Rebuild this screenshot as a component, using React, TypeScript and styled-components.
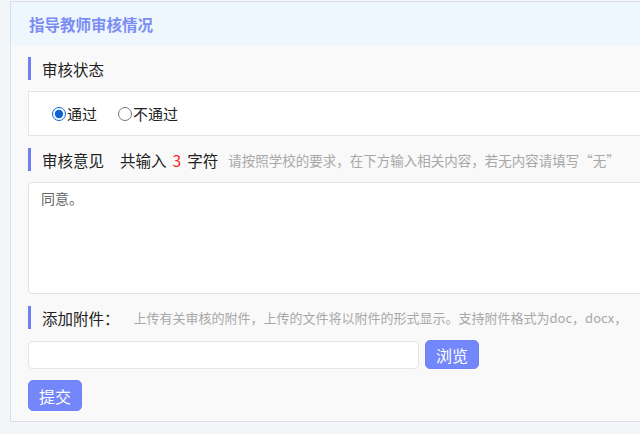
import { useState } from "react";
import styled, { createGlobalStyle } from "styled-components";

const GlobalStyle = createGlobalStyle`
  html, body {
    margin: 0;
    padding: 0;
    background: #f3f6f9;
    overflow: hidden;
  }
  body {
    font-family: "Noto Sans CJK SC", "Noto Sans", sans-serif;
  }
`;

const Page = styled.div`
  padding: 1px 0 0 10px;
`;

const Panel = styled.section`
  width: 700px;
  border: 1px solid #dcdfe3;
  background: #f9f9f9;
`;

const PanelHeader = styled.header`
  height: 44px;
  display: flex;
  align-items: center;
  padding-left: 18px;
  background: #eef7fe;
  color: #7b8cf3;
  font-size: 15.5px;
  font-weight: 700;
`;

const PanelBody = styled.div`
  display: flex;
  flex-direction: column;
  gap: 11px;
  padding: 11px 17px 10px;
`;

const SectionTitle = styled.div<{ $top?: number }>`
  height: 23px;
  display: flex;
  align-items: center;
  gap: 16px;
  margin-top: ${(p) => p.$top ?? 0}px;
  padding-left: 11px;
  border-left: 3px solid #6c7ff6;
  font-size: 15.5px;
  color: #222;
  white-space: nowrap;
`;

const Hint = styled.span<{ $offset?: number; $size?: number }>`
  font-size: ${(p) => p.$size ?? 13.5}px;
  color: #a8a8a8;
  margin-left: ${(p) => p.$offset ?? 0}px;
`;

const Count = styled.span`
  color: #ff1a1a;
  margin: 0 6px;
`;

const RadioBox = styled.div`
  height: 43px;
  display: flex;
  align-items: center;
  gap: 16px;
  padding-left: 18px;
  background: #fff;
  border: 1px solid #e4e4e4;
  border-right: none;
`;

const RadioLabel = styled.label`
  display: flex;
  align-items: center;
  font-size: 15px;
  color: #222;
  cursor: pointer;

  input {
    width: 14px;
    height: 14px;
    margin: 1px 1px 0 5px;
    accent-color: #0b62d6;
  }
`;

const Opinion = styled.textarea`
  height: 112px;
  box-sizing: border-box;
  padding: 5px 12px;
  border: 1px solid #e2e2e2;
  border-radius: 4px;
  background: #fff;
  font-family: inherit;
  font-size: 14px;
  color: #666;
  resize: none;
  outline: none;
`;

const FileRow = styled.div`
  display: flex;
  align-items: center;
  gap: 6px;
`;

const FileInput = styled.input`
  width: 391px;
  height: 28px;
  box-sizing: border-box;
  border: 1px solid #e4e4e4;
  border-radius: 4px;
  background: #fff;
  outline: none;
`;

const Button = styled.button<{ $h: number }>`
  width: 54px;
  height: ${(p) => p.$h}px;
  border: 1px solid #6f82f6;
  border-radius: 5px;
  background: #7387fa;
  color: #fff;
  font-family: inherit;
  font-size: 16px;
  padding: 0;
  cursor: pointer;
`;

const App = () => {
  const [status, setStatus] = useState("pass");
  const [text, setText] = useState("同意。");

  return (
    <Page>
      <GlobalStyle />
      <Panel>
        <PanelHeader>指导教师审核情况</PanelHeader>
        <PanelBody>
          <SectionTitle>审核状态</SectionTitle>
          <RadioBox>
            <RadioLabel>
              <input
                type="radio"
                checked={status === "pass"}
                onChange={() => setStatus("pass")}
              />
              通过
            </RadioLabel>
            <RadioLabel>
              <input
                type="radio"
                checked={status === "fail"}
                onChange={() => setStatus("fail")}
              />
              不通过
            </RadioLabel>
          </RadioBox>
          <SectionTitle $top={1}>
            审核意见
            <span>
              共输入<Count>{text.length}</Count>字符
            </span>
            <Hint $offset={-6}>
              请按照学校的要求，在下方输入相关内容，若无内容请填写“无”
            </Hint>
          </SectionTitle>
          <Opinion value={text} onChange={(e) => setText(e.target.value)} />
          <SectionTitle $top={1}>
            添加附件：
            <Hint $offset={-2} $size={13}>
              上传有关审核的附件，上传的文件将以附件的形式显示。支持附件格式为doc，docx，
            </Hint>
          </SectionTitle>
          <FileRow>
            <FileInput type="text" readOnly />
            <Button $h={29}>浏览</Button>
          </FileRow>
          <div>
            <Button $h={31}>提交</Button>
          </div>
        </PanelBody>
      </Panel>
    </Page>
  );
};

export default App;
